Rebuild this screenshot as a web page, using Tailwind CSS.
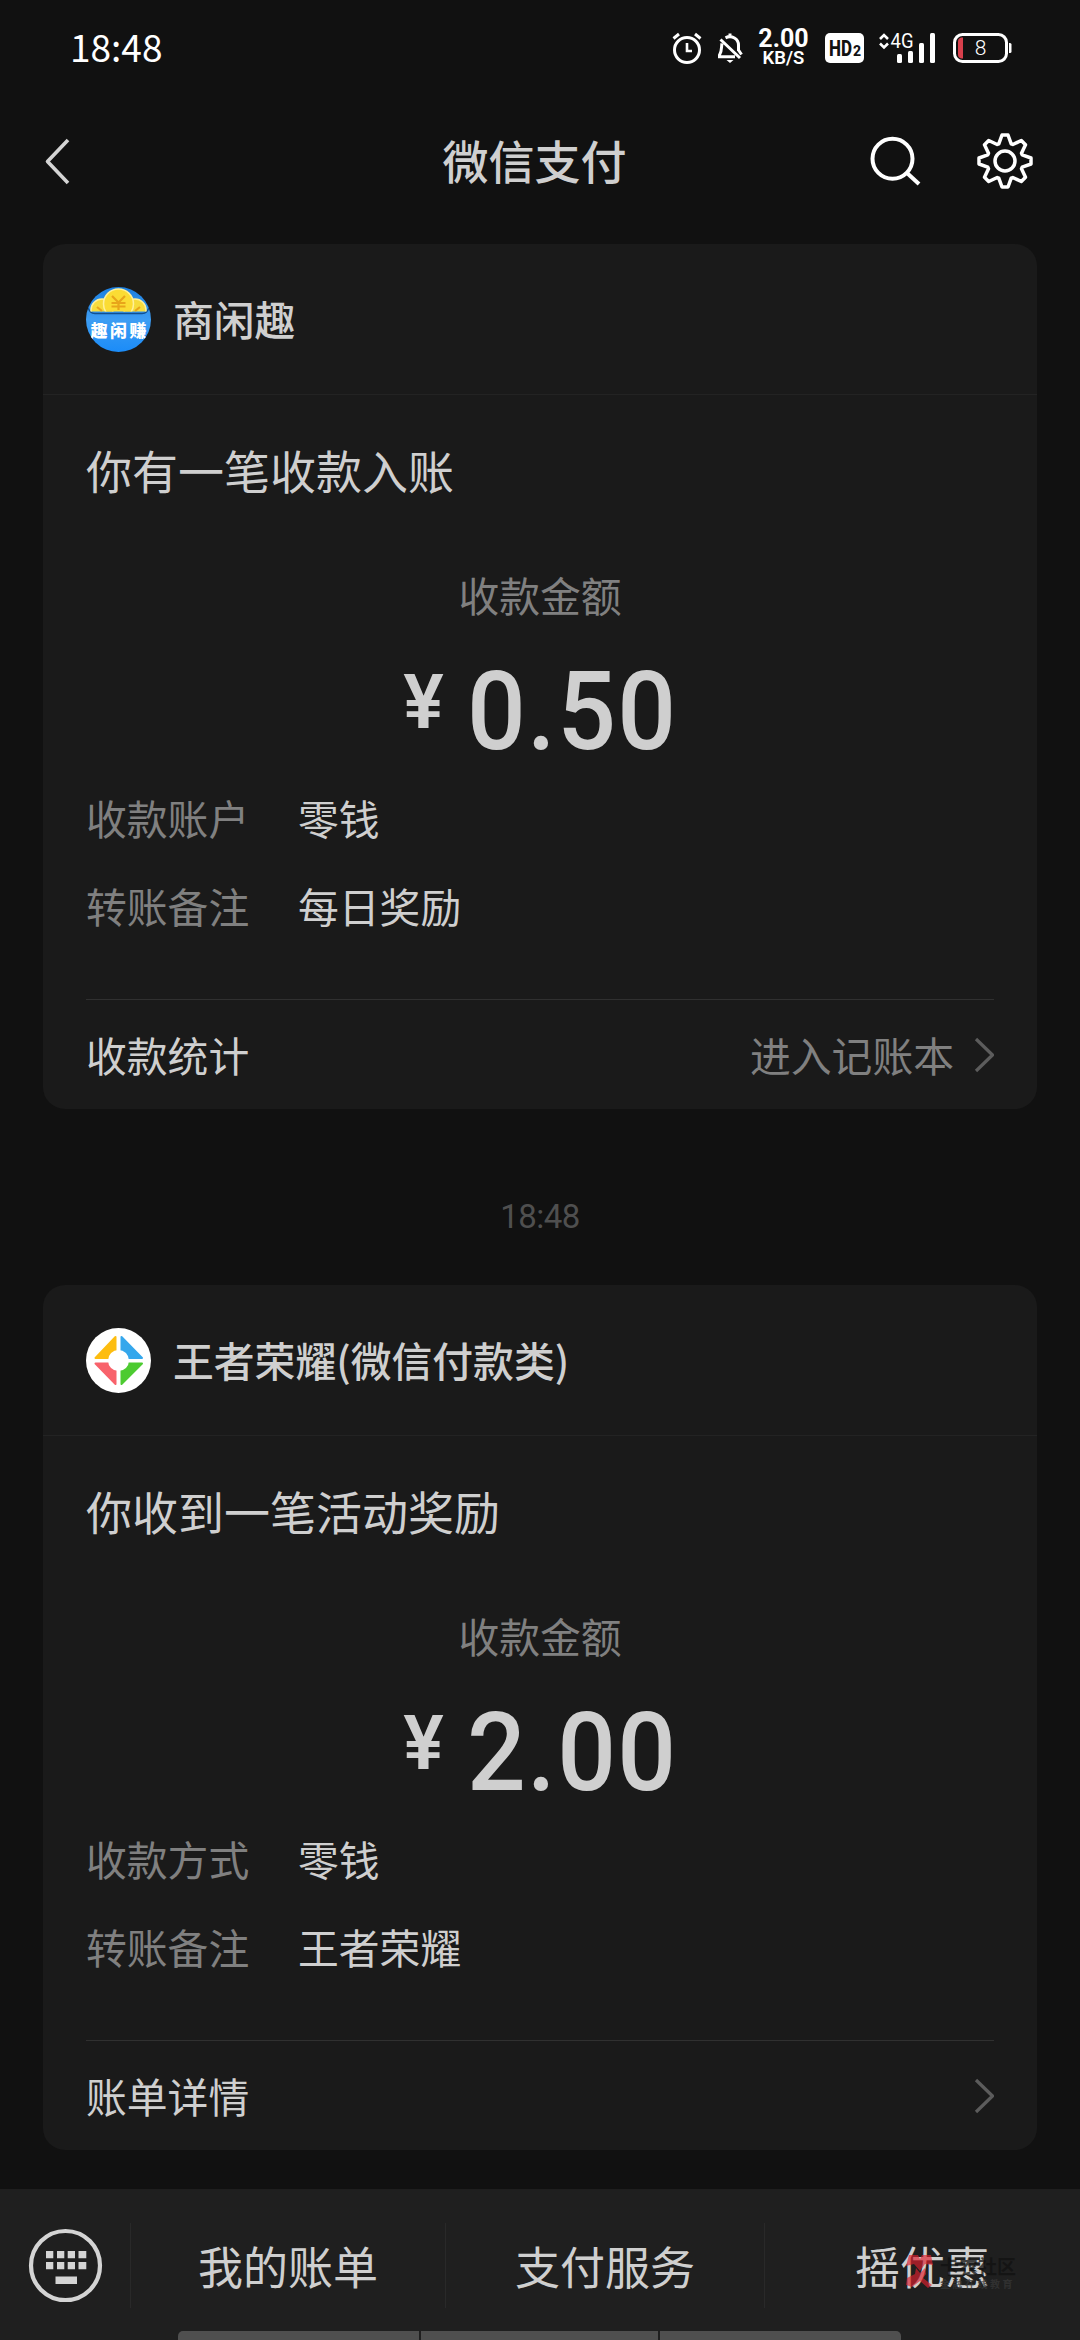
<!DOCTYPE html>
<html lang="zh-CN">
<head>
<meta charset="utf-8">
<title>微信支付</title>
<script src="https://cdn.jsdelivr.net/npm/@tailwindcss/browser@4"></script>
</head>
<body class="bg-[#111111]">
<div class="relative flex h-[2340px] w-[1080px] flex-col overflow-hidden bg-[#111111] font-['Noto_Sans_CJK_SC',sans-serif] text-[40.8px] text-[#cfcfcf]">

  <!-- Status bar -->
  <div class="flex h-24 shrink-0 items-center pl-[70px] pr-[68px] text-white">
    <div class="flex-1 pb-[3px] text-[37px] leading-[93px]">18:48</div>
    <svg class="mr-[15px] h-8 w-[30px] shrink-0" viewBox="0 0 30 32" fill="none" stroke="#fff" stroke-width="3">
      <circle cx="15" cy="18" r="12.5"/><path d="M15 11v8h5" stroke-width="2.6"/><path d="M1.5 6.5L7 2M28.5 6.5L23 2"/>
    </svg>
    <svg class="mr-[15px] h-8 w-[26px] shrink-0" viewBox="0 0 26 32" fill="none" stroke="#fff" stroke-width="3">
      <path d="M8.5 5.8C15 2.500 21.500 7 21.500 13v6M5 11.500c-.8 3 .2 7.500-2.500 11.500v1.800H18M13 1.500V5M3.500 7.500L23 26M21.500 18l3 4.500" /><path d="M9.500 28h7L13 31z" fill="#fff" stroke="none"/>
    </svg>
    <div class="mr-[16px] flex w-[51px] flex-col items-center font-['Roboto',sans-serif] font-bold">
      <span class="text-[25px] leading-[20px]">2.00</span>
      <span class="mt-[1px] text-[18.5px] font-semibold leading-[17px]">KB/S</span>
    </div>
    <svg class="mr-[14px] h-[30px] w-[39px] shrink-0" viewBox="0 0 39 30">
      <rect width="39" height="30" rx="5" fill="#fff"/>
      <text x="4" y="23" font-family="Roboto" font-weight="800" font-size="22" textLength="23" lengthAdjust="spacingAndGlyphs" fill="#111">HD</text>
      <text x="28" y="23" font-family="Roboto" font-weight="800" font-size="14" fill="#111">2</text>
    </svg>
    <svg class="mr-[17px] h-[30px] w-[58px] shrink-0 overflow-visible" viewBox="0 0 58 30" fill="#fff">
      <path d="M2 6l4-4 4 4M2 10.500l4 4 4-4" fill="none" stroke="#fff" stroke-width="2.600"/>
      <text x="12.500" y="15" font-family="Roboto" font-size="20" textLength="23" lengthAdjust="spacingAndGlyphs">4G</text>
      <rect x="19" y="21" width="5" height="9" rx="1.500"/><rect x="30" y="18" width="5" height="12" rx="1.500"/><rect x="41" y="10" width="5" height="20" rx="1.500"/><rect x="52" y="0" width="5" height="30" rx="1.500"/>
    </svg>
    <svg class="h-[30px] w-[59px] shrink-0" viewBox="0 0 59 30">
      <rect x="1.500" y="1.500" width="52" height="27" rx="8" fill="none" stroke="#fff" stroke-width="3"/>
      <path d="M56 10h1a1.500 1.500 0 0 1 1.500 1.500v7a1.500 1.500 0 0 1-1.500 1.500h-1z" fill="#fff"/>
      <path d="M10 4.500v21C6 25.500 5 24 5 21V9c0-3 1-4.500 5-4.500z" fill="#d8404c"/>
      <text x="27.500" y="22" text-anchor="middle" font-family="Roboto" font-weight="300" font-size="21" fill="#fff">8</text>
    </svg>
  </div>

  <!-- Title bar -->
  <div class="flex h-[130px] shrink-0 items-center pl-[44px] pr-[46px]">
    <svg class="h-[48px] w-[28px] shrink-0" viewBox="0 0 28 48" fill="none" stroke="#d4d4d4" stroke-width="3.600"><path d="M24 3L3.500 24.500L24 46" stroke-linejoin="round"/></svg>
    <div class="-mr-[34px] flex-1 pb-[5px] pl-[94px] text-center text-[46px] font-medium leading-[80px]">微信支付</div>
    <svg class="mr-[55px] h-[56px] w-[52px] shrink-0" viewBox="0 0 52 56" fill="none" stroke="#fff" stroke-width="4"><circle cx="23.500" cy="25.700" r="20"/><path d="M38 40L50 51"/></svg>
    <svg class="h-[58px] w-[58px] shrink-0" viewBox="-29 -29 58 58" fill="none" stroke="#fff" stroke-width="3.500" stroke-linejoin="round">
      <path d="M-6.200-17.200L-3-26 3-26 6.200-17.200 7.800-16.500 16.300-20.500 20.500-16.300 16.500-7.800 17.200-6.200 26-3 26 3 17.200 6.200 16.500 7.800 20.500 16.300 16.300 20.500 7.800 16.500 6.200 17.200 3 26-3 26-6.200 17.200-7.800 16.500-16.300 20.500-20.500 16.300-16.500 7.800-17.200 6.200-26 3-26-3-17.200-6.200-16.500-7.800-20.500-16.300-16.300-20.500-7.800-16.500z"/>
      <circle r="10"/>
    </svg>
  </div>

  <!-- Message: payment received -->
  <section class="mx-[43px] mt-[18px] flex h-[865px] shrink-0 flex-col rounded-[22px] bg-[#1a1a1a]">
    <div class="flex h-[151px] items-center border-b border-[#232323] pl-[43px]">
      <svg class="h-[65px] w-[65px]" viewBox="0 0 65 65">
        <defs>
          <linearGradient id="blue" x1="0" y1="0" x2="0" y2="1"><stop offset="0" stop-color="#1c7fe0"/><stop offset=".5" stop-color="#3d9df3"/><stop offset="1" stop-color="#1b8cf8"/></linearGradient>
          <clipPath id="disc"><circle cx="32.500" cy="32.500" r="32.500"/></clipPath>
          <clipPath id="pocket"><path d="M0 0h65v24.500H0z"/></clipPath>
        </defs>
        <g clip-path="url(#disc)">
          <path fill="url(#blue)" d="M0 0h65v65H0z"/>
          <path d="M1 19c3 6 4 7.500 8 7.500h47c4 0 5-1.500 8-7.500" fill="none" stroke="#12508f" stroke-width="1.500"/>
          <g clip-path="url(#pocket)" stroke="#fff09a" stroke-width="1.500">
            <circle cx="16" cy="23" r="11" fill="#f6dc3c"/><circle cx="49" cy="23" r="11" fill="#f6dc3c"/><circle cx="32.500" cy="17" r="15" fill="#fbdc34"/>
          </g>
          <path d="M26 9l6.500 6.500L39 9M25.500 16h14M25.500 19.500h14M32.500 15.500V23M11 20l5 4M54 20l-5 4" fill="none" stroke="#e8a51a" stroke-width="2.200"/>
          <text x="4.500" y="50" font-family="Noto Sans CJK SC" font-weight="900" font-size="17" textLength="56" fill="#fff">趣闲赚</text>
        </g>
      </svg>
      <span class="ml-[22px] font-medium leading-[60px]">商闲趣</span>
    </div>
    <div class="mt-10 pl-[43px] text-[46px] leading-[69px]">你有一笔收款入账</div>
    <div class="mt-[61px] text-center leading-[60px] text-[#808080]">收款金额</div>
    <div class="mt-[23px] flex h-32 justify-center pl-[14px] font-['Roboto',sans-serif] font-semibold leading-[128px]">
      <span class="mr-[23px] text-[76px] leading-[108px]">¥</span><span class="origin-left scale-x-[0.94] text-[110px] font-medium tracking-[1.4px]">0.50</span>
    </div>
    <div class="mt-[12px] flex pl-[43px] leading-[60px]"><span class="w-[212px] text-[#808080]">收款账户</span><span>零钱</span></div>
    <div class="mt-7 flex pl-[43px] leading-[60px]"><span class="w-[212px] text-[#808080]">转账备注</span><span>每日奖励</span></div>
    <div class="mx-[43px] mt-[63px] flex h-[110px] items-center border-t border-[#303030]">
      <span class="flex-1">收款统计</span><span class="mr-[20px] text-[#808080]">进入记账本</span>
      <svg class="h-9 w-5" viewBox="0 0 20 36" fill="none" stroke="#5c5c5c" stroke-width="3.200" stroke-linejoin="round"><path d="M2 2l16.500 16L2 34"/></svg>
    </div>
  </section>

  <div class="h-[176px] shrink-0 pt-[78px] text-center font-['Roboto',sans-serif] text-[33px] leading-[60px] tracking-[-0.5px] text-[#4f4f4f]">18:48</div>

  <!-- Message: activity reward -->
  <section class="mx-[43px] flex h-[865px] shrink-0 flex-col rounded-[22px] bg-[#1a1a1a]">
    <div class="flex h-[151px] items-center border-b border-[#232323] pl-[43px]">
      <svg class="h-[65px] w-[65px]" viewBox="0 0 65 65" stroke-linejoin="round" stroke-width="2">
        <circle cx="32.500" cy="32.500" r="32.500" fill="#fff"/>
        <path d="M29.500 9v21h-20z" fill="#fdbd10" stroke="#fdbd10"/>
        <path d="M35.500 9v21h20.500z" fill="#35a7ec" stroke="#35a7ec"/>
        <path d="M29.500 56V35.500h-20z" fill="#f8626b" stroke="#f8626b"/>
        <path d="M35.500 56V35.500h20.500z" fill="#4dcb31" stroke="#4dcb31"/>
        <circle cx="32.500" cy="32.500" r="10.500" fill="#fff"/>
      </svg>
      <span class="ml-[22px] font-medium leading-[60px]">王者荣耀(微信付款类)</span>
    </div>
    <div class="mt-10 pl-[43px] text-[46px] leading-[69px]">你收到一笔活动奖励</div>
    <div class="mt-[61px] text-center leading-[60px] text-[#808080]">收款金额</div>
    <div class="mt-[23px] flex h-32 justify-center pl-[14px] font-['Roboto',sans-serif] font-semibold leading-[128px]">
      <span class="mr-[23px] text-[76px] leading-[108px]">¥</span><span class="origin-left scale-x-[0.94] text-[110px] font-medium tracking-[1.4px]">2.00</span>
    </div>
    <div class="mt-[12px] flex pl-[43px] leading-[60px]"><span class="w-[212px] text-[#808080]">收款方式</span><span>零钱</span></div>
    <div class="mt-7 flex pl-[43px] leading-[60px]"><span class="w-[212px] text-[#808080]">转账备注</span><span>王者荣耀</span></div>
    <div class="mx-[43px] mt-[63px] flex h-[110px] items-center border-t border-[#303030]">
      <span class="flex-1">账单详情</span>
      <svg class="h-9 w-5" viewBox="0 0 20 36" fill="none" stroke="#5c5c5c" stroke-width="3.200" stroke-linejoin="round"><path d="M2 2l16.500 16L2 34"/></svg>
    </div>
  </section>

  <!-- Bottom menu -->
  <nav class="mt-[39px] flex h-[151px] shrink-0 bg-[#1f1f1f] text-[45px] leading-[85px]">
    <div class="flex w-[130px] justify-center pt-[39px]">
      <svg class="h-[75px] w-[75px]" viewBox="0 0 75 75" fill="#d4d4d4">
        <circle cx="37.500" cy="37.500" r="34.500" fill="none" stroke="#d4d4d4" stroke-width="4.200"/>
        <path d="M18 23h7.300v7.300H18zM29 23h7.300v7.300H29zM39.700 23H47v7.300h-7.300zM50.500 23h7.800v7.300h-7.800zM18 34h7.300v7.300H18zM29 34h7.300v7.300H29zM39.700 34H47v7.300h-7.300zM50.500 34h7.800v7.300h-7.800zM27.500 48.500H49v7.500H27.500z"/>
      </svg>
    </div>
    <div class="mt-[34px] h-[85px] w-[315px] border-l border-[#292929] text-center">我的账单</div>
    <div class="mt-[34px] h-[85px] w-[319px] border-l border-[#292929] text-center">支付服务</div>
    <div class="mt-[34px] h-[85px] w-[316px] border-l border-[#292929] text-center">摇优惠</div>
  </nav>

  <!-- Gesture hints along the bottom edge -->
  <div class="absolute bottom-0 left-[178px] flex h-[9px] w-[723px] gap-[2px] overflow-hidden rounded-t-[5px]">
    <i class="w-[241px] bg-[#4f4f4f]"></i><i class="w-[237px] bg-[#4f4f4f]"></i><i class="flex-1 bg-[#4f4f4f]"></i>
  </div>

  <!-- Community watermark -->
  <div class="absolute left-[906px] top-[2254px] flex gap-[7px]">
    <svg class="h-[34px] w-[27px]" viewBox="0 0 27 34" fill="#e0202e" fill-opacity=".65">
      <path d="M3 1h9l2 4 2-4h9l2 10-8-1-5 7-6-7-8 2zM10 14l4 5 5-5 1 6-3 4 9 7-4 3-8-7-8 6-6-2 1-7 8-4z"/>
    </svg>
    <div class="flex flex-col font-bold">
      <span class="text-[19px] leading-[23px] text-[#111111]/75">卡农社区</span>
      <span class="mt-[1px] text-[10px] leading-[12px] tracking-[2.5px] text-[#363636]/80">金融在线教育</span>
    </div>
  </div>
</div>
</body>
</html>
